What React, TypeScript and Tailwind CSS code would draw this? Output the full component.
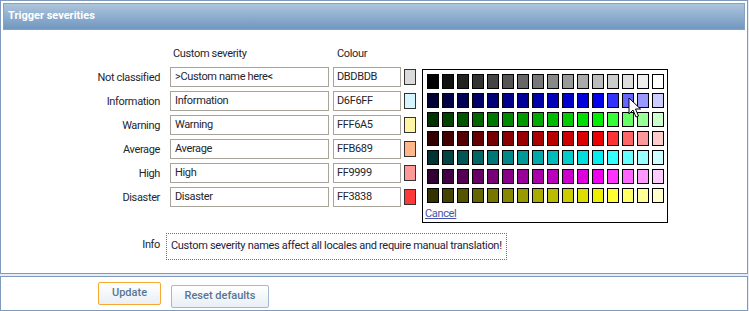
import React from 'react';

const font = { fontFamily: 'Roboto, "Liberation Sans", Arial, sans-serif' };

const severities = [
  { label: 'Not classified', name: '>Custom name here<', colour: 'DBDBDB' },
  { label: 'Information', name: 'Information', colour: 'D6F6FF' },
  { label: 'Warning', name: 'Warning', colour: 'FFF6A5' },
  { label: 'Average', name: 'Average', colour: 'FFB689' },
  { label: 'High', name: 'High', colour: 'FF9999' },
  { label: 'Disaster', name: 'Disaster', colour: 'FF3838' },
];

// palette: grey ramp + six hue ramps (dark steps then light tints)
const steps = ['33', '44', '55', '66', '77', '88', '99', 'AA', 'BB', 'CC', 'DD', 'EE'];
const tints = ['33', '66', '99', 'CC'];
const hues: [number, number, number][] = [
  [0, 0, 1],
  [0, 1, 0],
  [1, 0, 0],
  [0, 1, 1],
  [1, 0, 1],
  [1, 1, 0],
];

function buildPalette(): string[][] {
  const grey = '0123456789ABCDEF'.split('').map((c) => c + c + c + c + c + c);
  const rows = [grey];
  for (const h of hues) {
    const row: string[] = [];
    for (const s of steps) row.push(h.map((on) => (on ? s : '00')).join(''));
    for (const t of tints) row.push(h.map((on) => (on ? 'FF' : t)).join(''));
    rows.push(row);
  }
  return rows;
}

const palette = buildPalette();

function Cursor() {
  return (
    <svg width="14" height="22" viewBox="0 0 14 22" className="block">
      <path
        d="M1 1 L1 17 L5 13 L8 20 L10.5 19 L7.5 12 L12.5 12 Z"
        fill="#fff"
        stroke="#000"
        strokeWidth="1"
        strokeLinejoin="miter"
      />
    </svg>
  );
}

function ColourPicker() {
  return (
    <div className="w-[246px] h-[154px] border border-black bg-white pl-[4px] pt-[4px]">
      <div className="grid grid-cols-[repeat(16,12px)] gap-x-[3px] gap-y-[4px]">
        {palette.flat().map((c, i) => (
          <div
            key={i}
            className="w-[12px] h-[15px] border border-black"
            style={{ backgroundColor: '#' + c }}
          />
        ))}
      </div>
      <a className="block mt-[4px] ml-[-2px] text-[11px] leading-[13px] text-[#4455aa] underline cursor-pointer">
        Cancel
      </a>
    </div>
  );
}

export default function App() {
  return (
    <div className="w-[749px] h-[311px] bg-[#e6ecf2] text-[#1f252e] tracking-[-0.35px]" style={font}>
      <div className="relative w-[748px] h-[274px] border border-[#7e9bbd] bg-white p-[2px]">
        <div className="h-[27px] border border-[#86a3c4] bg-gradient-to-b from-[#aec5dc] to-[#7097bf] flex items-center pl-[4px]">
          <span className="text-white font-bold text-[11px] tracking-normal">Trigger severities</span>
        </div>

        <div className="grid grid-cols-[157px_159px_68px_12px] gap-x-[10px] mt-[16px] pt-[1px]">
          <div />
          <div className="pl-[3px] h-[14px] leading-[14px] text-[11px]">Custom severity</div>
          <div className="pl-[3px] h-[14px] leading-[14px] text-[11px] ml-[-5px]">Colour</div>
          <div />
        </div>

        <div className="flex flex-col gap-[4px] mt-[6px]">
          {severities.map((s) => (
            <div key={s.label} className="flex items-center h-[20px] text-[11px]">
              <div className="w-[157px] text-right pt-[2px]">{s.label}</div>
              <div className="ml-[10px] w-[159px] h-[20px] border border-[#a8a499] bg-white flex items-center pl-[4px] pt-[1px]">
                {s.name}
              </div>
              <div className="ml-[4px] w-[68px] h-[20px] border border-[#a8a499] bg-white flex items-center pl-[3px] pt-[1px]">
                {s.colour}
              </div>
              <div
                className="ml-[3px] w-[12px] h-[16px] border border-[#333]"
                style={{ backgroundColor: '#' + s.colour }}
              />
            </div>
          ))}
        </div>

        <div className="flex items-center mt-[26px] text-[11px]">
          <div className="w-[157px] text-right pb-[2px]">Info</div>
          <div className="ml-[6px] w-[341px] h-[27px] border border-dotted border-[#5a6fae] flex items-center pl-[4px] whitespace-nowrap text-[#1c2240] tracking-[-0.3px]">
            Custom severity names affect all locales and require manual translation!
          </div>
        </div>

        <div className="absolute left-[421px] top-[68px]">
          <ColourPicker />
        </div>
        <div className="absolute left-[627px] top-[96px]">
          <Cursor />
        </div>
      </div>

      <div className="mt-[2px] w-[748px] h-[35px] border border-[#7e9bbd] bg-white pt-[5px] flex">
        <div className="w-[160px] flex justify-end">
          <button className="w-[63px] h-[23px] border border-[#f7a832] rounded-[2px] bg-gradient-to-b from-white to-[#e9eff5] text-[11px] tracking-normal font-medium text-[#5a7593]">
            Update
          </button>
        </div>
        <div className="ml-[10px]">
          <button className="w-[98px] h-[23px] border border-[#a3b7cf] rounded-[2px] bg-gradient-to-b from-white to-[#e9eff5] text-[11px] tracking-normal font-medium text-[#5a7593]">
            Reset defaults
          </button>
        </div>
      </div>
    </div>
  );
}
